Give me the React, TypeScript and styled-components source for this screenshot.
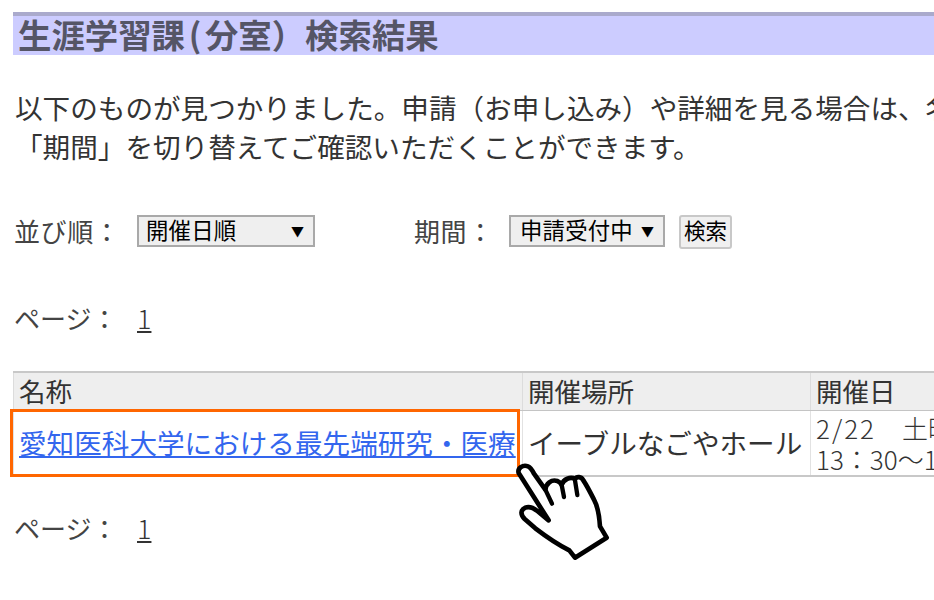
import styled, { createGlobalStyle } from "styled-components";

const GlobalStyle = createGlobalStyle`
  html, body {
    margin: 0;
    padding: 0;
    width: 934px;
    height: 600px;
    overflow: hidden;
    background: #fff;
  }
`;

const Page = styled.main`
  width: 934px;
  height: 600px;
  box-sizing: border-box;
  padding: 12px 0 0 13px;
  overflow: hidden;
  font-family: "Noto Sans CJK JP", "Liberation Sans", sans-serif;
  font-size: 27.6px;
  color: #333;
  white-space: nowrap;
`;

const Title = styled.h2`
  margin: 0;
  width: 921px;
  height: 39px;
  padding-left: 5px;
  border-top: 4px solid #aaaacc;
  background: #ccccff;
  color: #555566;
  font-size: 33.4px;
  font-weight: 700;
  line-height: 35px;
`;

const OpenParen = styled.span`
  display: inline-block;
  width: 20px;
  text-align: center;
`;

const Lead = styled.p`
  margin: 33px 0 0;
  padding-left: 2px;
  line-height: 39px;
`;

const FilterRow = styled.form`
  display: flex;
  align-items: flex-start;
  margin-top: 49px;
  height: 34px;
  padding-left: 1px;
`;

const FilterLabel = styled.label<{ $width: number; $indent?: number }>`
  width: ${(p) => p.$width}px;
  box-sizing: border-box;
  padding-left: ${(p) => p.$indent ?? 0}px;
  line-height: 32px;
  font-size: 26px;
  letter-spacing: 0.6px;
  color: #444;
`;

const SelectBox = styled.div<{ $width: number }>`
  position: relative;
  width: ${(p) => p.$width}px;
  height: 32px;
  box-sizing: border-box;
  border: 2px solid #a9a9a9;
  background: #efefef;

  &::after {
    content: "▼";
    position: absolute;
    right: 9px;
    top: 0;
    font-size: 13px;
    line-height: 27px;
    color: #000;
  }
`;

const Select = styled.select<{ $indent: number }>`
  appearance: none;
  display: block;
  width: 100%;
  height: 40px;
  margin-top: -8px;
  box-sizing: border-box;
  border: 0;
  padding: 0 0 0 ${(p) => p.$indent}px;
  background: transparent;
  font-family: inherit;
  font-size: 22.4px;
  letter-spacing: 0.2px;
  color: #000;
`;

const SearchButton = styled.button`
  width: 53px;
  height: 34px;
  margin-left: 14px;
  padding: 0 0 4px;
  box-sizing: border-box;
  border: 2px solid #c8c8c8;
  border-radius: 3px;
  background: #f0f0f0;
  font-family: inherit;
  font-size: 21.5px;
  line-height: 26px;
  color: #000;
`;

const Pager = styled.div<{ $top: number }>`
  display: flex;
  margin-top: ${(p) => p.$top}px;
  height: 38px;
  line-height: 38px;
  padding-left: 1px;
  font-size: 26px;
  color: #444;
`;

const PagerLabel = styled.span`
  width: 123px;
`;

const PagerLink = styled.a`
  color: #333;
  text-decoration: underline;
  font-size: 27px;
  font-weight: 300;
`;

const TableWrap = styled.div`
  position: relative;
  margin-top: 34px;
  width: 1300px;
`;

const Table = styled.table`
  table-layout: fixed;
  width: 1100px;
  border-collapse: collapse;
`;

const HeadCell = styled.th<{ $width: number }>`
  width: ${(p) => p.$width}px;
  height: 38px;
  box-sizing: border-box;
  padding: 0 0 0 5px;
  border: 1px solid #dcdcdc;
  border-top: 2px solid #c8c8c8;
  border-bottom: 1px solid #c4c4c4;
  background: #eeeeee;
  text-align: left;
  font-size: 26.5px;
  font-weight: 400;
  line-height: 36px;
  color: #333;
`;

const Cell = styled.td`
  height: 66px;
  box-sizing: border-box;
  padding: 0 0 0 5px;
  border: 1px solid #e2e2e2;
  border-bottom: 2px solid #c8c8c8;
  vertical-align: middle;
  line-height: 31px;
  color: #333;
`;

const DateCell = styled(Cell)`
  font-size: 26px;
  font-weight: 300;
`;

const WideDate = styled.span`
  letter-spacing: 2px;
`;

const EventLink = styled.a`
  color: #3366ee;
  text-decoration: underline;
  text-decoration-thickness: 2px;
  text-underline-offset: 2px;
`;

const Highlight = styled.div`
  position: absolute;
  left: -3px;
  top: 38px;
  width: 504px;
  height: 62px;
  border: 3px solid #ff6600;
  pointer-events: none;
`;

const Hand = styled.svg`
  position: absolute;
  left: 467px;
  top: 68px;
  width: 150px;
  height: 130px;
  overflow: visible;
`;

export default function App() {
  return (
    <>
      <GlobalStyle />
      <Page>
        <Title>
          生涯学習課<OpenParen>(</OpenParen>分室）検索結果
        </Title>
        <Lead>
          以下のものが見つかりました。申請（お申し込み）や詳細を見る場合は、名称をクリックしてください。
          <br />
          「期間」を切り替えてご確認いただくことができます。
        </Lead>

        <FilterRow>
          <FilterLabel $width={123}>並び順：</FilterLabel>
          <SelectBox $width={178}>
            <Select $indent={7} defaultValue="date">
              <option value="date">開催日順</option>
            </Select>
          </SelectBox>
          <FilterLabel $width={194} $indent={99}>
            期間：
          </FilterLabel>
          <SelectBox $width={156}>
            <Select $indent={9} defaultValue="open">
              <option value="open">申請受付中</option>
            </Select>
          </SelectBox>
          <SearchButton type="button">検索</SearchButton>
        </FilterRow>

        <Pager $top={50}>
          <PagerLabel>ページ：</PagerLabel>
          <PagerLink href="#">1</PagerLink>
        </Pager>

        <TableWrap>
          <Table>
            <thead>
              <tr>
                <HeadCell $width={509}>名称</HeadCell>
                <HeadCell $width={288}>開催場所</HeadCell>
                <HeadCell $width={303}>開催日</HeadCell>
              </tr>
            </thead>
            <tbody>
              <tr>
                <Cell>
                  <EventLink href="#">愛知医科大学における最先端研究・医療</EventLink>
                </Cell>
                <Cell>イーブルなごやホール</Cell>
                <DateCell>
                  <WideDate>2/22</WideDate>　土曜日
                  <br />
                  13：30～16：00
                </DateCell>
              </tr>
            </tbody>
          </Table>
          <Highlight />
          <Hand viewBox="0 0 450 390" aria-hidden="true">
            <path
              d="M116 102 C112 88 128 76 144 82 C152 85 157 94 162 104 L196 152 C198 134 214 120 232 126 C238 128 242 132 245 138 C250 120 272 112 285 120 C290 112 304 112 310 124 C322 142 336 170 342 182 C354 204 358 230 360 262 L380 296 L285 356 L268 334 C240 320 200 294 166 268 L134 240 C120 226 122 212 136 206 C150 200 162 208 172 216 L206 244 Z"
              fill="#fff"
              stroke="#000"
              strokeWidth="14"
              strokeLinejoin="round"
            />
            <path
              d="M196 152 L216 194 M245 138 L252 174 M285 124 L292 168"
              fill="none"
              stroke="#000"
              strokeWidth="13"
              strokeLinecap="round"
            />
          </Hand>
        </TableWrap>

        <Pager $top={32}>
          <PagerLabel>ページ：</PagerLabel>
          <PagerLink href="#">1</PagerLink>
        </Pager>
      </Page>
    </>
  );
}
